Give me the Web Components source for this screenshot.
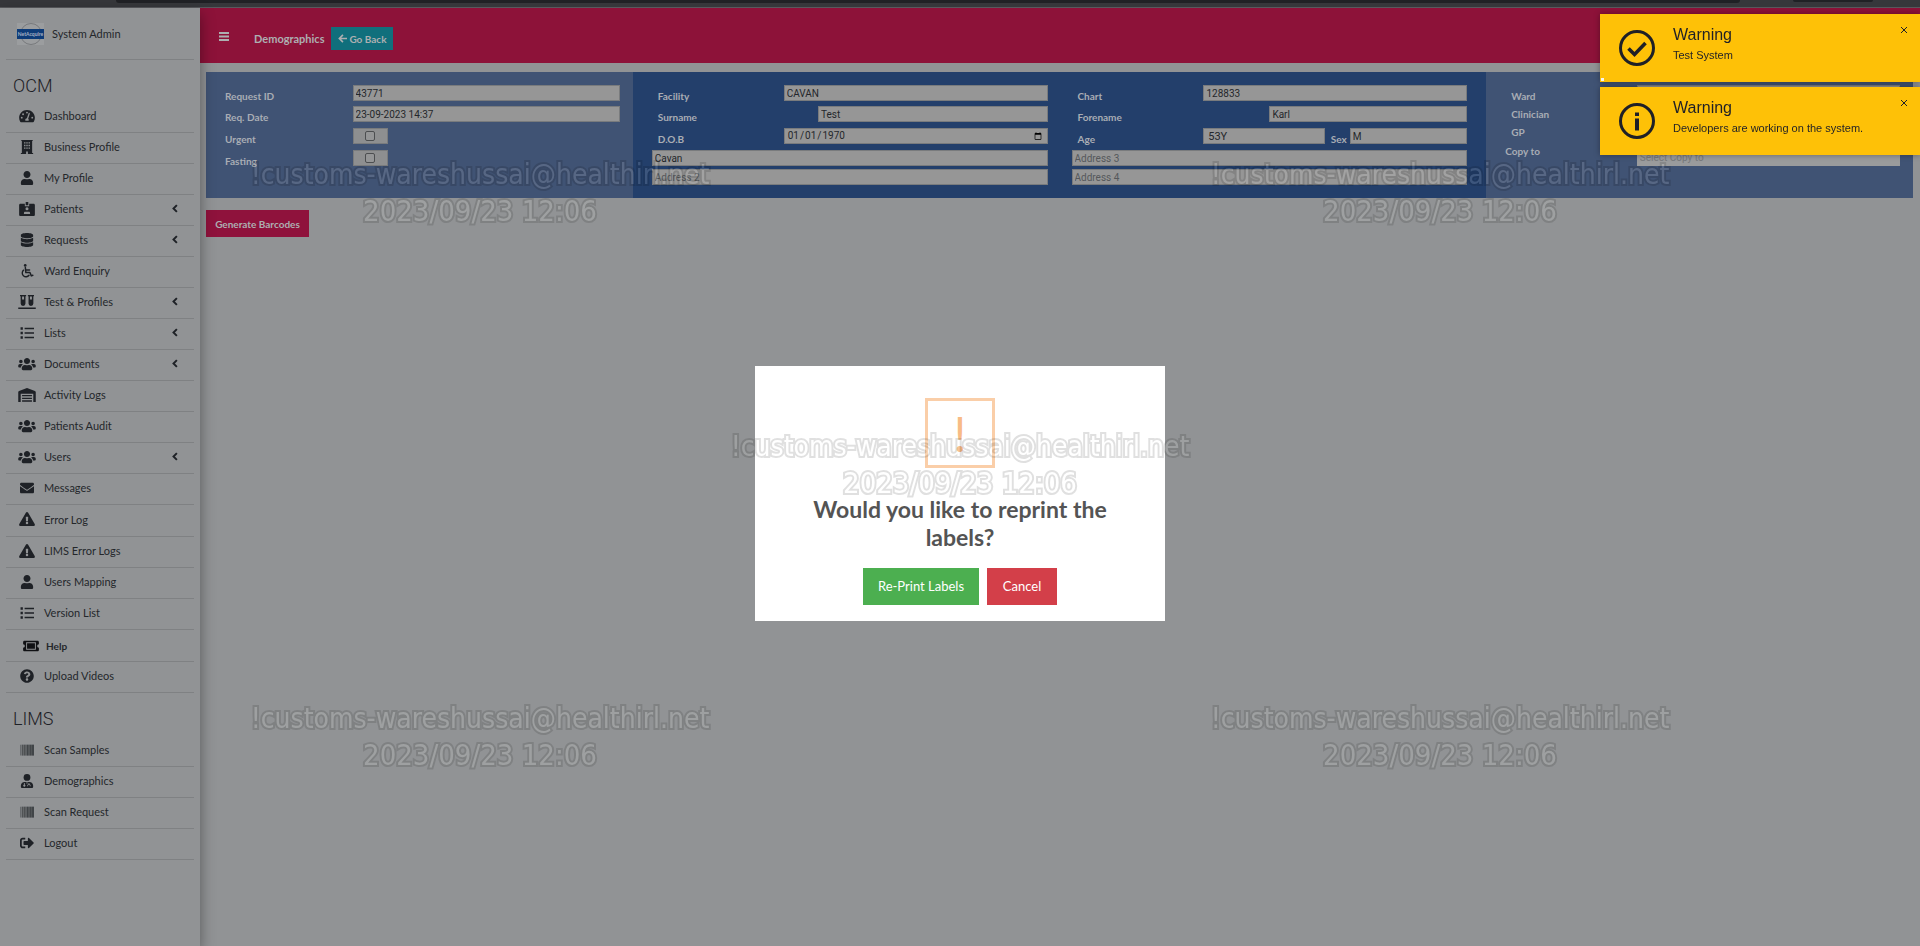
<!DOCTYPE html>
<html lang="en">
<head>
<meta charset="utf-8">
<title>Demographics</title>
<style>
  html, body { margin: 0; }
  body { min-height: 100vh; font-family: Lato, "Open Sans", sans-serif; font-size: 11px; color: #24272b; background: #919395; }
</style>
</head>
<body>
<ocm-app></ocm-app>
<script>
const ICONS = {
  dashboard: ['0 0 576 512', '<path fill-rule="evenodd" d="M288 32C129 32 0 161 0 320c0 53 14 102 39 145 6 9 16 15 27 15h444c11 0 21-6 27-15 25-43 39-92 39-145C576 161 447 32 288 32zm0 64a34 34 0 1 1 0 68 34 34 0 1 1 0-68zM96 350a34 34 0 1 1 0-68 34 34 0 1 1 0 68zm48-126a34 34 0 1 1 0-68 34 34 0 1 1 0 68zm247-54l-61 184c13 11 22 28 22 47 0 12-3 22-9 31H233c-6-9-9-19-9-31 0-34 27-62 61-64l61-183c10-28 54-14 45 16zm89 180a34 34 0 1 1 0-68 34 34 0 1 1 0 68z"/>'],
  building: ['0 0 448 512', '<path fill-rule="evenodd" d="M16 0h416v40h-20v432h36v40H256v-90h-64v90H0v-40h36V40H16zM116 80v52h52V80zm82 0v52h52V80zm82 0v52h52V80zM116 176v52h52v-52zm82 0v52h52v-52zm82 0v52h52v-52zM116 272v52h52v-52zm82 0v52h52v-52zm82 0v52h52v-52z"/>'],
  user: ['0 0 448 512', '<path d="M224 256c70.700 0 128-57.300 128-128S294.700 0 224 0 96 57.300 96 128s57.300 128 128 128zm89.600 32h-16.700c-22.200 10.200-46.900 16-72.900 16s-50.600-5.800-72.900-16h-16.700C60.200 288 0 348.200 0 422.400V464c0 26.500 21.500 48 48 48h352c26.500 0 48-21.500 48-48v-41.600c0-74.200-60.200-134.400-134.400-134.400z"/>'],
  patient: ['0 0 576 512', '<path fill-rule="evenodd" d="M240 0h96v120h-96zM48 64h160v88h160V64h160c27 0 48 21 48 48v352c0 27-21 48-48 48H48c-27 0-48-21-48-48V112c0-27 21-48 48-48zm240 130a56 56 0 1 0 0 112 56 56 0 1 0 0-112zM176 440h224v-30c0-32-18-50-50-50H226c-32 0-50 18-50 50z"/>'],
  database: ['0 0 448 512', '<path d="M448 73v46c0 40-100 73-224 73S0 159 0 119V73C0 33 100 0 224 0s224 33 224 73zM448 176v103c0 40-100 73-224 73S0 319 0 279V176c48 33 136 49 224 49s176-16 224-49zm0 160v103c0 40-100 73-224 73S0 479 0 439V336c48 33 136 49 224 49s176-16 224-49z"/>'],
  wheelchair: ['0 0 512 512', '<circle cx="190" cy="52" r="50"/><path fill="none" stroke="currentColor" stroke-width="54" stroke-linecap="round" stroke-linejoin="round" d="M196 130l18 184h150l50 120 56-22M220 216h130"/><path fill="none" stroke="currentColor" stroke-width="50" stroke-linecap="round" d="M130 224A138 138 0 1 0 330 412"/>'],
  vials: ['0 0 640 512', '<path fill-rule="evenodd" d="M0 456h640v56H0zM64 0h224v50h-24v260a60 60 0 0 1-176 0V50H64zM140 56v110h72V56zM352 0h224v50h-24v260a60 60 0 0 1-176 0V50h-24zm76 56v110h72V56z"/>'],
  list: ['0 0 512 512', '<path d="M20 50h84v84H20zM20 214h84v84H20zM20 378h84v84H20zM168 66h344v52H168zM168 230h344v52H168zM168 394h344v52H168z"/>'],
  users: ['0 0 640 512', '<path d="M96 224c35.300 0 64-28.700 64-64s-28.700-64-64-64-64 28.700-64 64 28.700 64 64 64zm448 0c35.300 0 64-28.700 64-64s-28.700-64-64-64-64 28.700-64 64 28.700 64 64 64zm32 32h-64c-17.600 0-33.500 7.100-45.100 18.600 40.300 22.100 68.900 62 75.100 109.400h66c17.700 0 32-14.300 32-32v-32c0-35.300-28.700-64-64-64zm-256 0c61.900 0 112-50.100 112-112S381.900 32 320 32 208 82.100 208 144s50.100 112 112 112zm76.800 32h-8.300c-20.800 10-43.900 16-68.500 16s-47.600-6-68.500-16h-8.300C179.600 288 128 339.600 128 403.200V432c0 26.500 21.500 48 48 48h288c26.500 0 48-21.500 48-48v-28.800c0-63.600-51.600-115.200-115.200-115.200zm-223.700-13.400C161.500 263.100 145.600 256 128 256H64c-35.300 0-64 28.700-64 64v32c0 17.700 14.300 32 32 32h65.900c6.300-47.400 34.900-87.300 75.200-109.400z"/>'],
  warehouse: ['0 0 640 512', '<path d="M0 512V150c0-20 12-36 30-44L296 6q24-10 48 0l266 100c18 8 30 24 30 44v362h-90V210H90v302zM140 256h360v48H140zM140 352h360v48H140zM140 448h360v56H140z"/>'],
  envelope: ['0 0 512 512', '<path d="M502.300 190.800c3.900-3.100 9.700-.2 9.700 4.700V400c0 26.500-21.500 48-48 48H48c-26.500 0-48-21.500-48-48V195.600c0-5 5.700-7.800 9.700-4.700 22.400 17.400 52.100 39.500 154.100 113.600 21.100 15.400 56.700 47.800 92.200 47.600 35.700.3 72-32.800 92.300-47.600 102-74.100 131.600-96.300 154-113.700zM256 320c23.200.4 56.600-29.200 73.400-41.400 132.700-96.300 142.800-104.700 173.400-128.700 5.800-4.500 9.200-11.500 9.200-18.900v-19c0-26.500-21.500-48-48-48H48c-26.500 0-48 21.500-48 48v19c0 7.400 3.400 14.300 9.200 18.900 30.600 23.900 40.700 32.400 173.400 128.700 16.800 12.200 50.200 41.800 73.400 41.400z"/>'],
  warning: ['0 0 576 512', '<path fill-rule="evenodd" d="M569.500 440C588 472 564.800 512 528 512H48c-37 0-60-40-41.500-72L246.400 24c18.500-32 64.700-32 83.200 0zM288 354a46 46 0 1 0 0 92 46 46 0 1 0 0-92zm-43.700-165.300l7.400 136c.4 6.300 5.600 11.300 12 11.300h48.600c6.400 0 11.600-5 12-11.300l7.400-136c.4-6.900-5-12.700-12-12.700h-63.400c-6.900 0-12.400 5.800-12 12.700z"/>'],
  ticket: ['0 0 576 512', '<path fill-rule="evenodd" d="M48 64h480c27 0 48 21 48 48v80a64 64 0 0 0 0 128v80c0 27-21 48-48 48H48c-27 0-48-21-48-48v-80a64 64 0 0 0 0-128v-80c0-27 21-48 48-48zm62 58v268h356V122zm34 34h288v200H144z"/>'],
  question: ['0 0 512 512', '<path d="M504 256c0 137-111 248-248 248S8 393 8 256C8 119 119 8 256 8s248 111 248 248zM262.700 90c-54.500 0-89.300 23-116.600 63.800-3.500 5.200-2.300 12.400 2.700 16.200l34.700 26.300c5.200 4 12.600 3 16.700-2.100 17.900-22.700 30.100-35.800 57.300-35.800 20.400 0 45.700 13.100 45.700 33 0 15-12.400 22.600-32.500 33.900C247 238.500 216 255 216 296v4c0 6.600 5.400 12 12 12h56c6.600 0 12-5.400 12-12v-1.300c0-28.500 83.200-29.700 83.200-106.700 0-58-60.200-102-116.500-102zM256 338c-25.400 0-46 20.600-46 46s20.600 46 46 46 46-20.600 46-46-20.600-46-46-46z"/>'],
  barcode: ['0 0 512 512', '<path opacity=".38" d="M60 60h452v400H60z"/><path opacity=".5" d="M0 60h26v400H0zM64 60h30v400H64zM160 60h30v400h-30zM250 60h60v400h-60zM350 60h50v400h-50zM420 60h92v400h-92z"/>'],
  doctor: ['0 0 448 512', '<circle cx="224" cy="124" r="124"/><path fill-rule="evenodd" d="M134 288h180c74 0 134 60 134 134v42c0 27-21 48-48 48H48c-27 0-48-21-48-48v-42c0-74 60-134 134-134zM112 330v54a40 40 0 1 0 30 0v-54zm168 0v40c-30 6-46 30-46 82h28c0-40 10-56 33-56s33 16 33 56h28c0-52-16-76-46-82v-40zM190 310l34 60 34-60z"/>'],
  logout: ['0 0 512 512', '<path d="M497 273L329 441c-15 15-41 4.500-41-17v-96H152c-13.300 0-24-10.700-24-24v-96c0-13.300 10.700-24 24-24h136V88c0-21.400 25.900-32 41-17l168 168c9.300 9.400 9.300 24.600 0 34zM192 436v-40c0-6.600-5.400-12-12-12H96c-17.700 0-32-14.300-32-32V160c0-17.700 14.300-32 32-32h84c6.600 0 12-5.400 12-12V76c0-6.600-5.400-12-12-12H96c-53 0-96 43-96 96v192c0 53 43 96 96 96h84c6.600 0 12-5.400 12-12z"/>'],
  chevron: ['0 0 8 12', '<path fill="none" stroke="currentColor" stroke-width="2.600" d="M6.500 1.500L2 6l4.500 4.500"/>'],
  bars: ['0 0 10 9', '<path d="M0 0h10v2H0zM0 3.500h10v2H0zM0 7h10v2H0z"/>'],
  back: ['0 0 10 10', '<path fill="none" stroke="currentColor" stroke-width="1.800" d="M5.500 1L1.500 5l4 4M1.500 5H10"/>'],
  check: ['0 0 36 36', '<g fill="none" stroke="currentColor"><circle cx="18" cy="18" r="16.500" stroke-width="3"/><path stroke-width="3.600" d="M9.500 18.500l6 6L26.500 13"/></g>'],
  info: ['0 0 36 36', '<circle cx="18" cy="18" r="16.500" fill="none" stroke="currentColor" stroke-width="3"/><path d="M16 9.500h4v3.500h-4zM16 15.500h4v12h-4z"/>'],
  close: ['0 0 8 8', '<path fill="none" stroke="currentColor" d="M1 1l6 6M7 1L1 7"/>']
};

class Base extends HTMLElement {
  constructor() { super(); this.attachShadow({ mode: 'open' }); }
  connectedCallback() {
    this.shadowRoot.innerHTML =
      `<style>*{box-sizing:border-box}:host{display:block}button,input,select{font:inherit;margin:0;border-radius:0}${this.css()}</style>${this.html()}`;
  }
  a(name) { return this.getAttribute(name) || ''; }
}

customElements.define('ui-icon', class extends Base {
  css() { return ':host{display:inline-flex;flex:none;width:16px;height:14px}svg{width:100%;height:100%;fill:currentColor;display:block}'; }
  html() { const [box, body] = ICONS[this.a('name')]; return `<svg viewBox="${box}" aria-hidden="true">${body}</svg>`; }
});

customElements.define('net-logo', class extends Base {
  css() { return ':host{width:27px;height:22px;flex:none}svg{display:block;width:100%;height:100%}'; }
  html() {
    return `<svg viewBox="0 0 27 22" role="img" aria-label="NetAcquire"><path fill="#9b9d9f" d="M0 0h27v22H0z"/>
      <circle cx="14" cy="11" r="10.500" fill="none" stroke="#77797c"/><path fill="#0d3b78" d="M0 6h27v10H0z"/>
      <text x="13.500" y="13" text-anchor="middle" font-family="Lato, sans-serif" font-weight="700" font-size="5" fill="#a9b4c4">NetAcquire</text></svg>`;
  }
});

customElements.define('menu-item', class extends Base {
  css() { return `:host{border-bottom:1px solid #7f8183}
    a{display:flex;align-items:center;height:30px;padding:0 16px 3px 12px;color:inherit;text-decoration:none}
    :host([tall]) a{height:31px}
    ui-icon{width:18px;margin-right:8px;color:#1e2126}
    .arrow{width:6px;height:9px;margin:0 0 0 auto}
    :host([strong]) a{padding:0 16px;font-weight:700;font-size:10px}
    :host([strong]) ui-icon{color:#101114;margin-right:6px}`; }
  html() { return `<a href="#"><ui-icon name="${this.a('icon')}"></ui-icon><slot></slot>${this.hasAttribute('more') ? '<ui-icon class="arrow" name="chevron"></ui-icon>' : ''}</a>`; }
});

customElements.define('side-bar', class extends Base {
  css() { return `:host{width:200px;flex:none;padding:0 6px;background:#919395;box-shadow:0 6px 14px rgba(0,0,0,.4);position:relative;z-index:1}
    .who{display:flex;align-items:center;gap:8px;height:52px;padding-left:11px;border-bottom:1px solid #7f8183}
    h2{margin:0;padding:15px 0 0 7px;height:42px;color:#1e2126;font:300 18px/22px Roboto,sans-serif}
    h2.second{height:43px}`; }
  html() { return `<div class="who"><net-logo></net-logo>System Admin</div>
    <nav><h2>OCM</h2>
    <menu-item icon="dashboard">Dashboard</menu-item>
    <menu-item icon="building">Business Profile</menu-item>
    <menu-item icon="user">My Profile</menu-item>
    <menu-item icon="patient" more>Patients</menu-item>
    <menu-item icon="database" more>Requests</menu-item>
    <menu-item icon="wheelchair">Ward Enquiry</menu-item>
    <menu-item icon="vials" more>Test &amp; Profiles</menu-item>
    <menu-item icon="list" more>Lists</menu-item>
    <menu-item icon="users" more>Documents</menu-item>
    <menu-item icon="warehouse">Activity Logs</menu-item>
    <menu-item icon="users">Patients Audit</menu-item>
    <menu-item icon="users" more>Users</menu-item>
    <menu-item icon="envelope">Messages</menu-item>
    <menu-item icon="warning" tall>Error Log</menu-item>
    <menu-item icon="warning">LIMS Error Logs</menu-item>
    <menu-item icon="user">Users Mapping</menu-item>
    <menu-item icon="list">Version List</menu-item>
    <menu-item icon="ticket" strong tall>Help</menu-item>
    <menu-item icon="question">Upload Videos</menu-item>
    <h2 class="second">LIMS</h2>
    <menu-item icon="barcode">Scan Samples</menu-item>
    <menu-item icon="doctor">Demographics</menu-item>
    <menu-item icon="barcode">Scan Request</menu-item>
    <menu-item icon="logout">Logout</menu-item></nav>`; }
});

customElements.define('top-bar', class extends Base {
  css() { return `:host{display:flex;align-items:center;height:55px;padding:6px 19px 0;background:#8d1239;color:#adafb1}
    button{border:0;padding:0;background:none;color:inherit}
    .menu{display:flex;margin:0 25px 4px 0}.menu ui-icon{width:10px;height:9px}
    h1{margin:0 7px 0 0;font-size:11px;font-weight:700}
    .back{display:flex;align-items:center;justify-content:center;gap:2px;height:23px;width:62px;background:#106f7c;font-weight:700;font-size:10px}
    .back ui-icon{width:9px;height:9px}`; }
  html() { return `<button class="menu" aria-label="Toggle menu"><ui-icon name="bars"></ui-icon></button><h1>Demographics</h1>
    <button class="back"><ui-icon name="back"></ui-icon>Go Back</button>`; }
});

/* One label with its control; --w is the control's share of the row. */
customElements.define('form-field', class extends Base {
  css() { return `:host{display:flex;align-items:flex-start;height:100%}
    label{flex:1;padding-left:6px;line-height:22px;font-weight:700;font-size:10px;color:#a9adb4;white-space:nowrap}
    input,select{width:var(--w);height:16px;flex:none;padding:0 2px;border:1px solid #797b7d;background:#969696;color:#24272b;font:10px/14px Roboto,sans-serif;appearance:none}
    :host([wide]) input{width:100%}
    :host([big]) input{font-size:11px;padding-left:4px}
    input::placeholder{color:#55585b;opacity:1}
    input[type=date]{padding:0 5px 0 2px}
    input::-webkit-datetime-edit,input::-webkit-datetime-edit-fields-wrapper{padding:0}
    input::-webkit-calendar-picker-indicator{width:8px;height:8px;padding:0;margin:0}
    .box{width:35px;height:16px;display:flex;align-items:center;justify-content:center;border:1px solid #797b7d;background:#8e8f90;margin-right:calc(var(--w) - 35px)}
    .box input{width:10px;height:10px;padding:0;border:1px solid #4c4e50;border-radius:2px;background:#949596}
    :host([tail]) label{flex:none;padding:0 3px 0 6px}
    :host([tail]) input{flex:1;width:0}
    :host([out]) label{padding-left:0}
    :host([out]) select{margin-top:10px;border-color:#9a9b9c;background:#9a9b9c;color:#77797b}`; }
  html() {
    const l = this.a('label'), v = this.a('value'), t = this.a('type') || 'text';
    const lab = this.hasAttribute('wide') ? '' : `<label for="f">${l}</label>`;
    if (t === 'checkbox') return `${lab}<span class="box"><input id="f" type="checkbox"></span>`;
    if (t === 'select') return `${lab}<select id="f"><option>${v}</option></select>`;
    return `${lab}<input id="f" type="${t}" value="${v}"${lab ? '' : ` aria-label="${l}" placeholder="${l}"`}>`;
  }
});

customElements.define('request-panel', class extends Base {
  css() { return `:host{display:grid;grid-template-columns:repeat(4,1fr);height:126px}
    section{--w:calc(200% / 3);display:grid;grid-template-rows:21px 22px 22px 19px 16px;padding:13px 13px 0;background:#405374}
    .dark{background:#233f6b}
    .b{padding:13px 12px 0 19px}.c{padding:13px 19px 0 12px}
    .b form-field[narrow]{--w:58%}.c form-field[narrow]{--w:50%}
    .pair{display:grid;grid-template-columns:64% 36%}.pair form-field{--w:48%}
    .d{grid-template-rows:18px 18px 19px 19px;padding-left:19px}`; }
  html() { return `<section class="a"><form-field label="Request ID" value="43771"></form-field>
      <form-field label="Req. Date" value="23-09-2023 14:37"></form-field>
      <form-field label="Urgent" type="checkbox"></form-field>
      <form-field label="Fasting" type="checkbox"></form-field></section>
    <section class="b dark"><form-field label="Facility" value="CAVAN"></form-field>
      <form-field narrow label="Surname" value="Test"></form-field>
      <form-field label="D.O.B" type="date" value="1970-01-01"></form-field>
      <form-field wide label="Address 1" value="Cavan"></form-field>
      <form-field wide label="Address 2"></form-field></section>
    <section class="c dark"><form-field label="Chart" value="128833"></form-field>
      <form-field narrow label="Forename" value="Karl"></form-field>
      <div class="pair"><form-field big label="Age" value="53Y"></form-field><form-field tail label="Sex" value="M"></form-field></div>
      <form-field wide label="Address 3"></form-field>
      <form-field wide label="Address 4"></form-field></section>
    <section class="d"><form-field label="Ward"></form-field>
      <form-field label="Clinician"></form-field>
      <form-field label="GP"></form-field>
      <form-field out label="Copy to" type="select" value="Select Copy to"></form-field></section>`; }
});

customElements.define('toast-note', class extends Base {
  css() { return `:host{display:grid;grid-template-columns:36px 1fr auto;column-gap:18px;height:68px;padding:0 12px 0 19px;background:#fec107;color:#1f2027;font-family:"Liberation Sans",sans-serif;box-shadow:0 0 6px rgba(0,0,0,.35);position:relative}
    .sign{width:36px;height:36px;align-self:center}
    strong{display:block;margin-top:11px;font:400 16px/20px "Liberation Sans",sans-serif}
    p{margin:1px 0 0;font-size:11px;line-height:18px}
    button{align-self:start;margin-top:12px;border:0;padding:0;background:none;display:flex;color:inherit}button ui-icon{width:8px;height:8px}
    :host([progress])::after{content:"";position:absolute;left:1px;bottom:1px;width:3px;height:3px;background:#f4f4f4}`; }
  html() { return `<ui-icon class="sign" name="${this.a('icon')}"></ui-icon><div><strong>Warning</strong><p><slot></slot></p></div><button aria-label="Close"><ui-icon name="close"></ui-icon></button>`; }
});

customElements.define('confirm-dialog', class extends Base {
  css() { return `:host{width:410px;height:255px;background:#fff;display:flex;flex-direction:column;align-items:center;color:#545454}
    .sign{width:70px;height:70px;margin-top:32px;border:3px solid #facea8;color:#f8bb86;font-size:48px;line-height:66px;text-align:center}
    h2{margin:27px 40px 0;font-size:23px;line-height:28px;font-weight:700;text-align:center}
    .row{display:flex;gap:8px;margin-top:17px}
    button{height:37px;border:0;padding:0;width:116px;background:#4caf50;color:#fff;font-size:13px}
    .no{width:70px;background:#d33f49}`; }
  html() { return `<div class="sign" aria-hidden="true">!</div><h2>Would you like to reprint the labels?</h2>
    <div class="row"><button>Re-Print Labels</button><button class="no">Cancel</button></div>`; }
});

customElements.define('water-marks', class extends Base {
  css() { return `:host{position:fixed;inset:0;padding:57px 0 73px;display:grid;grid-template:repeat(3,1fr)/1fr 1fr;place-items:center;pointer-events:none;z-index:4}
    div{text-align:center;font:28px/36px "DejaVu Sans Condensed","DejaVu Sans",sans-serif;color:#fff;-webkit-text-stroke:4px #000;paint-order:stroke fill;opacity:.12}
    time{font-size:29px}
    .mid{grid-column:1/3}`; }
  html() { const m = c => `<div class="${c}">!customs-wareshussai@healthirl.net<br><time>2023/09/23 12:06</time></div>`; return m('') + m('') + m('mid') + m('') + m(''); }
});

customElements.define('ocm-app', class extends Base {
  css() { return `:host{display:flex;flex-direction:column;min-height:100vh;border-bottom:1px solid #b8babb}
    .chrome{height:8px;background:#36373b;border-bottom:1px solid #58595d;display:flex;align-items:flex-start;padding-left:116px}
    .chrome i{height:3px;background:#202125;border-radius:0 0 6px 6px}
    .chrome i:first-child{width:90%}.chrome i:last-child{width:80px;margin-left:53px;height:2px}
    .body{flex:1;display:flex}
    main{flex:1;min-width:0}
    request-panel{margin:9px 7px 12px 6px}
    .gen{margin-left:6px;height:27px;width:103px;border:0;padding:0;background:#8f123c;color:#adafb1;font-weight:700;font-size:10px}
    .toasts{position:fixed;right:0;top:14px;width:320px;display:grid;gap:5px;z-index:5}
    .veil{position:fixed;inset:40px 0 0;display:grid;place-items:center;z-index:3;pointer-events:none}
    confirm-dialog{pointer-events:auto}`; }
  html() { return `<div class="chrome"><i></i><i></i></div>
    <div class="body"><side-bar></side-bar><main><top-bar></top-bar><request-panel></request-panel><button class="gen">Generate Barcodes</button></main></div>
    <div class="veil"><confirm-dialog role="dialog"></confirm-dialog></div>
    <water-marks></water-marks>
    <div class="toasts"><toast-note icon="check" progress>Test System</toast-note><toast-note icon="info">Developers are working on the system.</toast-note></div>`; }
});
</script>
</body>
</html>
